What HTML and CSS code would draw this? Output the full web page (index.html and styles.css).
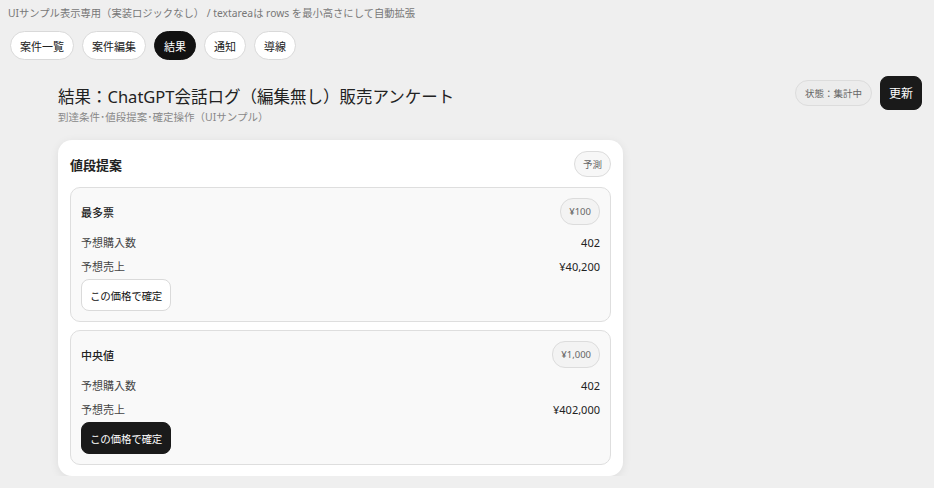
FILE: index.html
```html
<!DOCTYPE html>
<html lang="ja">
<head>
    <meta charset="UTF-8">
    <meta name="viewport" content="width=device-width, initial-scale=1.0">
    <title>結果</title>
    <link rel="stylesheet" href="styles.css">
</head>
<body>
<p class="note">UIサンプル表示専用（実装ロジックなし） / textareaは rows を最小高さにして自動拡張</p>

<nav class="tabs">
    <span class="tab">案件一覧</span>
    <span class="tab">案件編集</span>
    <span class="tab active">結果</span>
    <span class="tab">通知</span>
    <span class="tab">導線</span>
</nav>

<main class="page">
    <div class="page-head">
        <div>
            <h1>結果：ChatGPT会話ログ（編集無し）販売アンケート</h1>
            <p class="sub">到達条件･値段提案･確定操作（UIサンプル）</p>
        </div>
        <div class="head-actions">
            <span class="pill status">状態：集計中</span>
            <button class="btn dark refresh">更新</button>
        </div>
    </div>

    <section class="card">
        <div class="card-head">
            <h2>値段提案</h2>
            <span class="pill">予測</span>
        </div>

        <div class="option">
            <div class="option-head">
                <span class="option-title">最多票</span>
                <span class="pill">¥100</span>
            </div>
            <div class="row"><span>予想購入数</span><span class="val">402</span></div>
            <div class="row"><span>予想売上</span><span class="val">¥40,200</span></div>
            <button class="btn">この価格で確定</button>
        </div>

        <div class="option">
            <div class="option-head">
                <span class="option-title">中央値</span>
                <span class="pill">¥1,000</span>
            </div>
            <div class="row"><span>予想購入数</span><span class="val">402</span></div>
            <div class="row"><span>予想売上</span><span class="val">¥402,000</span></div>
            <button class="btn dark">この価格で確定</button>
        </div>
    </section>
</main>
</body>
</html>
```

FILE: styles.css
```css
body {
    margin: 0;
    background-color: #efefef;
    color: #222;
    font-family: "Noto Sans", "Noto Sans CJK JP", sans-serif;
}

.note {
    margin: 0;
    padding: 5px 8px 0;
    font-size: 10.3px;
    line-height: 16px;
    color: #777;
}

.tabs {
    display: flex;
    gap: 8px;
    padding: 10px 10px 0;
}

.tab {
    display: inline-flex;
    align-items: center;
    height: 27px;
    padding: 0 9px;
    border: 1px solid #d9d9d9;
    border-radius: 15px;
    background-color: #fff;
    font-size: 11px;
}

.tab.active {
    background-color: #111;
    border-color: #111;
    color: #fff;
}

.page {
    padding: 16px 12px 0 58px;
}

.page-head {
    display: flex;
    justify-content: space-between;
    align-items: flex-start;
}

h1 {
    margin: 9px 0 0;
    font-size: 16.5px;
    font-weight: 400;
    line-height: 24px;
}

.sub {
    margin: 0;
    font-size: 10.5px;
    line-height: 16px;
    color: #888;
}

.head-actions {
    display: flex;
    align-items: center;
    gap: 8px;
}

.pill {
    display: inline-flex;
    align-items: center;
    height: 24px;
    padding: 0 8px;
    border: 1px solid #dcdcdc;
    border-radius: 13px;
    font-size: 9.5px;
    color: #666;
}

.status {
    padding: 0 9px;
    background-color: #ececec;
}

.btn {
    height: 32px;
    padding: 0 8px;
    border: 1px solid #dadada;
    border-radius: 8px;
    background-color: #fff;
    color: #111;
    font-family: inherit;
    font-size: 10.5px;
    letter-spacing: -0.2px;
}

.btn.dark {
    background-color: #1a1a1a;
    border-color: #1a1a1a;
    color: #fff;
}

.refresh {
    height: 34px;
    padding: 0 8px;
    font-size: 12px;
    letter-spacing: 0;
}

.card {
    width: 541px;
    margin-top: 15px;
    padding: 11px 12px;
    background-color: #fff;
    border-radius: 14px;
    box-shadow: 0 2px 10px rgba(0, 0, 0, 0.08);
}

.card-head {
    display: flex;
    justify-content: space-between;
    align-items: center;
    margin-bottom: 10px;
}

.card-head .pill {
    background-color: #f7f7f7;
}

h2 {
    margin: 0;
    font-size: 13px;
    font-weight: 700;
}

.option {
    padding: 10px;
    border: 1px solid #dedede;
    border-radius: 10px;
    background-color: #f9f9f9;
}

.option + .option {
    margin-top: 8px;
}

.option-head {
    display: flex;
    justify-content: space-between;
    align-items: center;
    margin-bottom: 5px;
}

.option-head .pill {
    height: 25px;
    background-color: #f3f3f3;
}

.option-title {
    font-size: 11px;
    font-weight: 500;
}

.row {
    display: flex;
    justify-content: space-between;
    align-items: center;
    height: 24px;
    font-size: 11px;
    color: #444;
}

.row .val {
    color: #222;
}

.option .btn {
    margin-top: 1px;
}
```
